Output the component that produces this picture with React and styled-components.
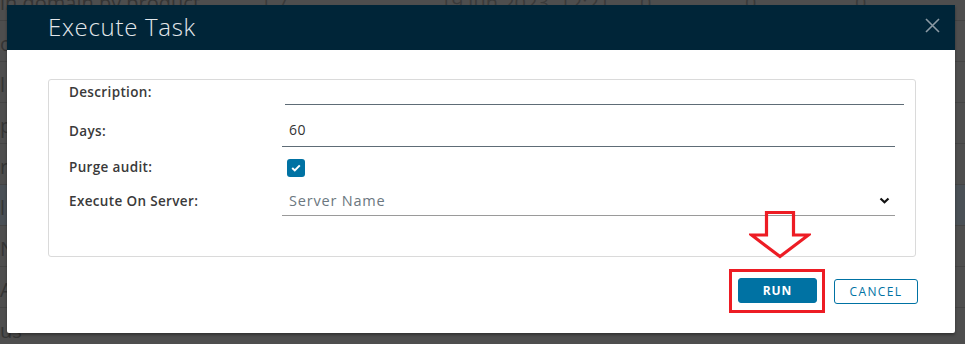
import React from "react";
import styled, { createGlobalStyle } from "styled-components";

const GlobalStyle = createGlobalStyle`
  body {
    margin: 0;
    background: #4e4e4e;
    font-family: "Open Sans", "Liberation Sans", sans-serif;
  }
`;

const backdropRows = [
  { cells: ["in domain by product", "1.7", "19 Jun 2023, 12:21...", "0", "0", "0"] },
  { cells: ["o"] },
  { cells: ["l"] },
  { cells: ["p"] },
  { cells: ["ra"] },
  { cells: ["l"], active: true },
  { cells: ["N"] },
  { cells: ["A"] },
  { cells: ["us"] },
];

const Page = () => {
  return (
    <Screen>
      <Backdrop>
        {backdropRows.map((row, i) => (
          <BackRow key={i} $active={row.active}>
            {row.cells.map((c, j) => (
              <BackCell key={j} $col={j}>
                {c}
              </BackCell>
            ))}
          </BackRow>
        ))}
      </Backdrop>

      <Modal>
        <Header>
          <Title>Execute Task</Title>
          <CloseButton aria-label="close">
            <svg width="15" height="15" viewBox="0 0 15 15">
              <path
                d="M1 1 L14 14 M14 1 L1 14"
                stroke="#8b9aa4"
                strokeWidth="1.6"
                fill="none"
              />
            </svg>
          </CloseButton>
        </Header>

        <Body>
          <Panel>
            <Row $gap={0}>
              <Label>Description:</Label>
              <TextField $wide $h={23} $pb={3} />
            </Row>
            <Row $gap={16}>
              <Label>Days:</Label>
              <TextField $h={26} $pb={6}>
                60
              </TextField>
            </Row>
            <Row $gap={10}>
              <Label>Purge audit:</Label>
              <CheckBox>
                <svg width="10" height="8" viewBox="0 0 10 8">
                  <path
                    d="M1.2 4 L3.8 6.4 L8.8 1.4"
                    stroke="#fff"
                    strokeWidth="2"
                    fill="none"
                  />
                </svg>
              </CheckBox>
            </Row>
            <Row $gap={14}>
              <Label>Execute On Server:</Label>
              <SelectField>
                <Placeholder>Server Name</Placeholder>
                <svg width="11" height="7" viewBox="0 0 11 7">
                  <path
                    d="M1.5 1.5 L5.5 5.3 L9.5 1.5"
                    stroke="#111"
                    strokeWidth="2.2"
                    fill="none"
                  />
                </svg>
              </SelectField>
            </Row>
          </Panel>

          <Footer>
            <Highlight>
              <Arrow width="62" height="50" viewBox="0 0 62 50">
                <polygon
                  points="17.5,2.5 44.5,2.5 44.5,25 59.5,25 31,46.5 2.5,25 17.5,25"
                  fill="none"
                  stroke="#ed1c24"
                  strokeWidth="3.2"
                />
              </Arrow>
              <Button $primary>RUN</Button>
            </Highlight>
            <Button>CANCEL</Button>
          </Footer>
        </Body>
      </Modal>
    </Screen>
  );
};

const Screen = styled.div`
  position: relative;
  width: 965px;
  height: 344px;
  overflow: hidden;
  background: #4e4e4e;
`;

const Backdrop = styled.div`
  display: flex;
  flex-direction: column;
  margin-top: -20px;
`;

const BackRow = styled.div`
  display: flex;
  align-items: center;
  height: 40px;
  border-bottom: 1px solid #444;
  background: ${(p) => (p.$active ? "#4a5056" : "transparent")};
  font-size: 20px;
`;

const BackCell = styled.div`
  width: ${(p) => ["260px", "180px", "200px", "105px", "110px", "80px"][p.$col]};
  white-space: nowrap;
  padding-top: 4px;
  color: ${(p) => (p.$col === 0 ? "#343434" : "#3a3a3a")};
`;

const Modal = styled.div`
  position: absolute;
  left: 7px;
  top: 5px;
  width: 948px;
  height: 328px;
  background: #fff;
  border-radius: 0 0 2px 2px;
  box-shadow: 0 2px 3px rgba(0, 0, 0, 0.35);
  display: flex;
  flex-direction: column;
`;

const Header = styled.div`
  height: 45px;
  background: #002538;
  display: flex;
  align-items: center;
  justify-content: space-between;
  padding: 0 15px 0 41px;
`;

const Title = styled.h3`
  margin: 0;
  font-family: "Open Sans", "Liberation Sans", sans-serif;
  font-weight: 300;
  font-size: 24px;
  letter-spacing: 0.7px;
  color: #e3e7ea;
  padding-bottom: 2px;
`;

const CloseButton = styled.button`
  border: none;
  background: transparent;
  padding: 0;
  display: flex;
  margin-bottom: 4px;
`;

const Body = styled.div`
  padding: 29px 39px 0 41px;
  display: flex;
  flex-direction: column;
`;

const Panel = styled.div`
  height: 178px;
  box-sizing: border-box;
  border: 1px solid #dadada;
  border-radius: 3px;
  padding: 2px 20px 0 20px;
  display: flex;
  flex-direction: column;
`;

const Row = styled.div`
  display: grid;
  grid-template-columns: 213px 1fr;
  align-items: start;
  margin-top: ${(p) => p.$gap}px;
`;

const Label = styled.div`
  font-size: 13.5px;
  font-weight: 600;
  letter-spacing: 0.35px;
  color: #3a3a3a;
  line-height: 20px;
`;

const TextField = styled.div`
  box-sizing: border-box;
  height: ${(p) => p.$h}px;
  padding: 0 0 ${(p) => p.$pb}px 7px;
  display: flex;
  align-items: flex-end;
  font-size: 14px;
  letter-spacing: 0.4px;
  color: #333;
  line-height: 20px;
  border-bottom: 1px solid #5e6c76;
  margin: ${(p) => (p.$wide ? "0 -9px 0 3px" : "0")};
`;

const CheckBox = styled.div`
  width: 18px;
  height: 18px;
  margin: 2px 0 0 5px;
  border-radius: 3px;
  background: #0072a3;
  display: flex;
  align-items: center;
  justify-content: center;
`;

const SelectField = styled.div`
  box-sizing: border-box;
  height: 25px;
  padding: 0 5px 5px 7px;
  display: flex;
  align-items: center;
  justify-content: space-between;
  border-bottom: 1px solid #9a9a9a;
`;

const Placeholder = styled.span`
  font-size: 14.5px;
  color: #6c7780;
  line-height: 20px;
  letter-spacing: 0.8px;
`;

const Footer = styled.div`
  display: flex;
  justify-content: flex-end;
  align-items: center;
  gap: 9px;
  margin: 12px -2px 0 0;
`;

const Highlight = styled.div`
  position: relative;
  border: 3px solid #ed1c24;
  padding: 6px 5px 7px 6px;
  display: flex;
`;

const Arrow = styled.svg`
  position: absolute;
  left: 17px;
  top: -62px;
`;

const Button = styled.button`
  box-sizing: border-box;
  height: 25px;
  width: ${(p) => (p.$primary ? "79px" : "84px")};
  border-radius: 3px;
  border: 1px solid #0072a3;
  background: ${(p) => (p.$primary ? "#0072a3" : "#fff")};
  color: ${(p) => (p.$primary ? "#fff" : "#0072a3")};
  font-family: "Open Sans", "Liberation Sans", sans-serif;
  font-size: 12px;
  font-weight: ${(p) => (p.$primary ? 700 : 500)};
  letter-spacing: ${(p) => (p.$primary ? "1px" : "1.4px")};
  padding: 0;
  cursor: pointer;
`;

export default function App() {
  return (
    <>
      <GlobalStyle />
      <Page />
    </>
  );
}
